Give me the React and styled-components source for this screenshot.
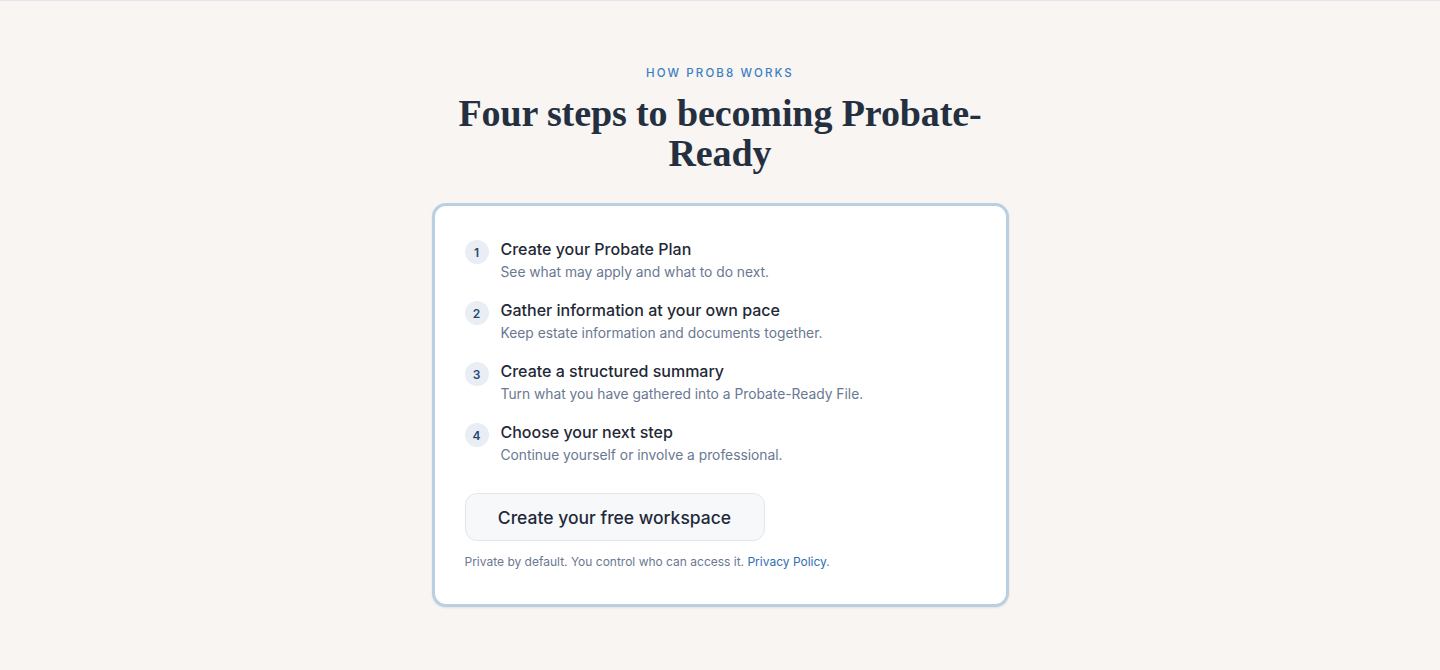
import React from "react";
import styled, { createGlobalStyle } from "styled-components";

const Global = createGlobalStyle`
  html, body { margin: 0; padding: 0; }
  body {
    background: #f8f5f2;
    font-family: Inter, "DejaVu Sans", sans-serif;
    -webkit-font-smoothing: antialiased;
  }
`;

const Page = styled.div`
  min-height: 670px;
  box-sizing: border-box;
  border-top: 1px solid #e4e4ee;
  display: flex;
  flex-direction: column;
  align-items: center;
  padding-top: 64px;
`;

const Eyebrow = styled.div`
  font-size: 11.5px;
  font-weight: 500;
  letter-spacing: 2.1px;
  color: #3b7fc2;
  text-transform: uppercase;
  line-height: 16px;
`;

const Heading = styled.h2`
  margin: 12px 0 0;
  font-family: "Liberation Serif", "DejaVu Serif", serif;
  font-weight: 700;
  font-size: 38px;
  line-height: 40px;
  color: #243040;
  text-align: center;
  letter-spacing: -0.1px;
`;

const Card = styled.div`
  margin-top: 30px;
  width: 577px;
  box-sizing: border-box;
  background: #fff;
  border: 3px solid #b9cfe2;
  border-radius: 14px;
  box-shadow: 0 1px 2px rgba(60, 90, 120, 0.12);
  padding: 31px 31px 33px 30px;
`;

const Steps = styled.ol`
  list-style: none;
  margin: 0;
  padding: 0;
  display: flex;
  flex-direction: column;
  gap: 15px;
`;

const Step = styled.li`
  display: flex;
  gap: 12px;
  align-items: flex-start;
`;

const Num = styled.span`
  flex: none;
  width: 24px;
  height: 24px;
  margin-top: 3px;
  border-radius: 50%;
  background: #e9eef4;
  color: #29486e;
  font-size: 12px;
  font-weight: 600;
  display: flex;
  align-items: center;
  justify-content: center;
`;

const Body = styled.div`
  display: flex;
  flex-direction: column;
`;

const Title = styled.div`
  font-size: 16px;
  line-height: 24px;
  font-weight: 500;
  color: #1f2937;
`;

const Sub = styled.div`
  font-size: 13.8px;
  line-height: 22px;
  color: #6a7891;
`;

const Button = styled.button`
  margin-top: 27px;
  width: 300px;
  height: 48px;
  border-radius: 12px;
  border: 1px solid #e2e6ec;
  background: #f7f8fa;
  color: #1f2a3a;
  font-family: inherit;
  font-size: 17.5px;
  font-weight: 500;
  cursor: pointer;
`;

const Note = styled.p`
  margin: 12px 0 0;
  font-size: 12px;
  line-height: 18px;
  color: #6a7891;
`;

const Link = styled.a`
  color: #2f6fb2;
  text-decoration: none;
`;

const steps = [
  ["Create your Probate Plan", "See what may apply and what to do next."],
  ["Gather information at your own pace", "Keep estate information and documents together."],
  ["Create a structured summary", "Turn what you have gathered into a Probate-Ready File."],
  ["Choose your next step", "Continue yourself or involve a professional."],
];

export default function App() {
  return (
    <>
      <Global />
      <Page>
        <Eyebrow>How Prob8 works</Eyebrow>
        <Heading>
          Four steps to becoming Probate-
          <br />
          Ready
        </Heading>
        <Card>
          <Steps>
            {steps.map(([t, s], i) => (
              <Step key={i}>
                <Num>{i + 1}</Num>
                <Body>
                  <Title>{t}</Title>
                  <Sub>{s}</Sub>
                </Body>
              </Step>
            ))}
          </Steps>
          <Button>Create your free workspace</Button>
          <Note>
            Private by default. You control who can access it.{" "}
            <Link href="#">Privacy Policy</Link>.
          </Note>
        </Card>
      </Page>
    </>
  );
}
